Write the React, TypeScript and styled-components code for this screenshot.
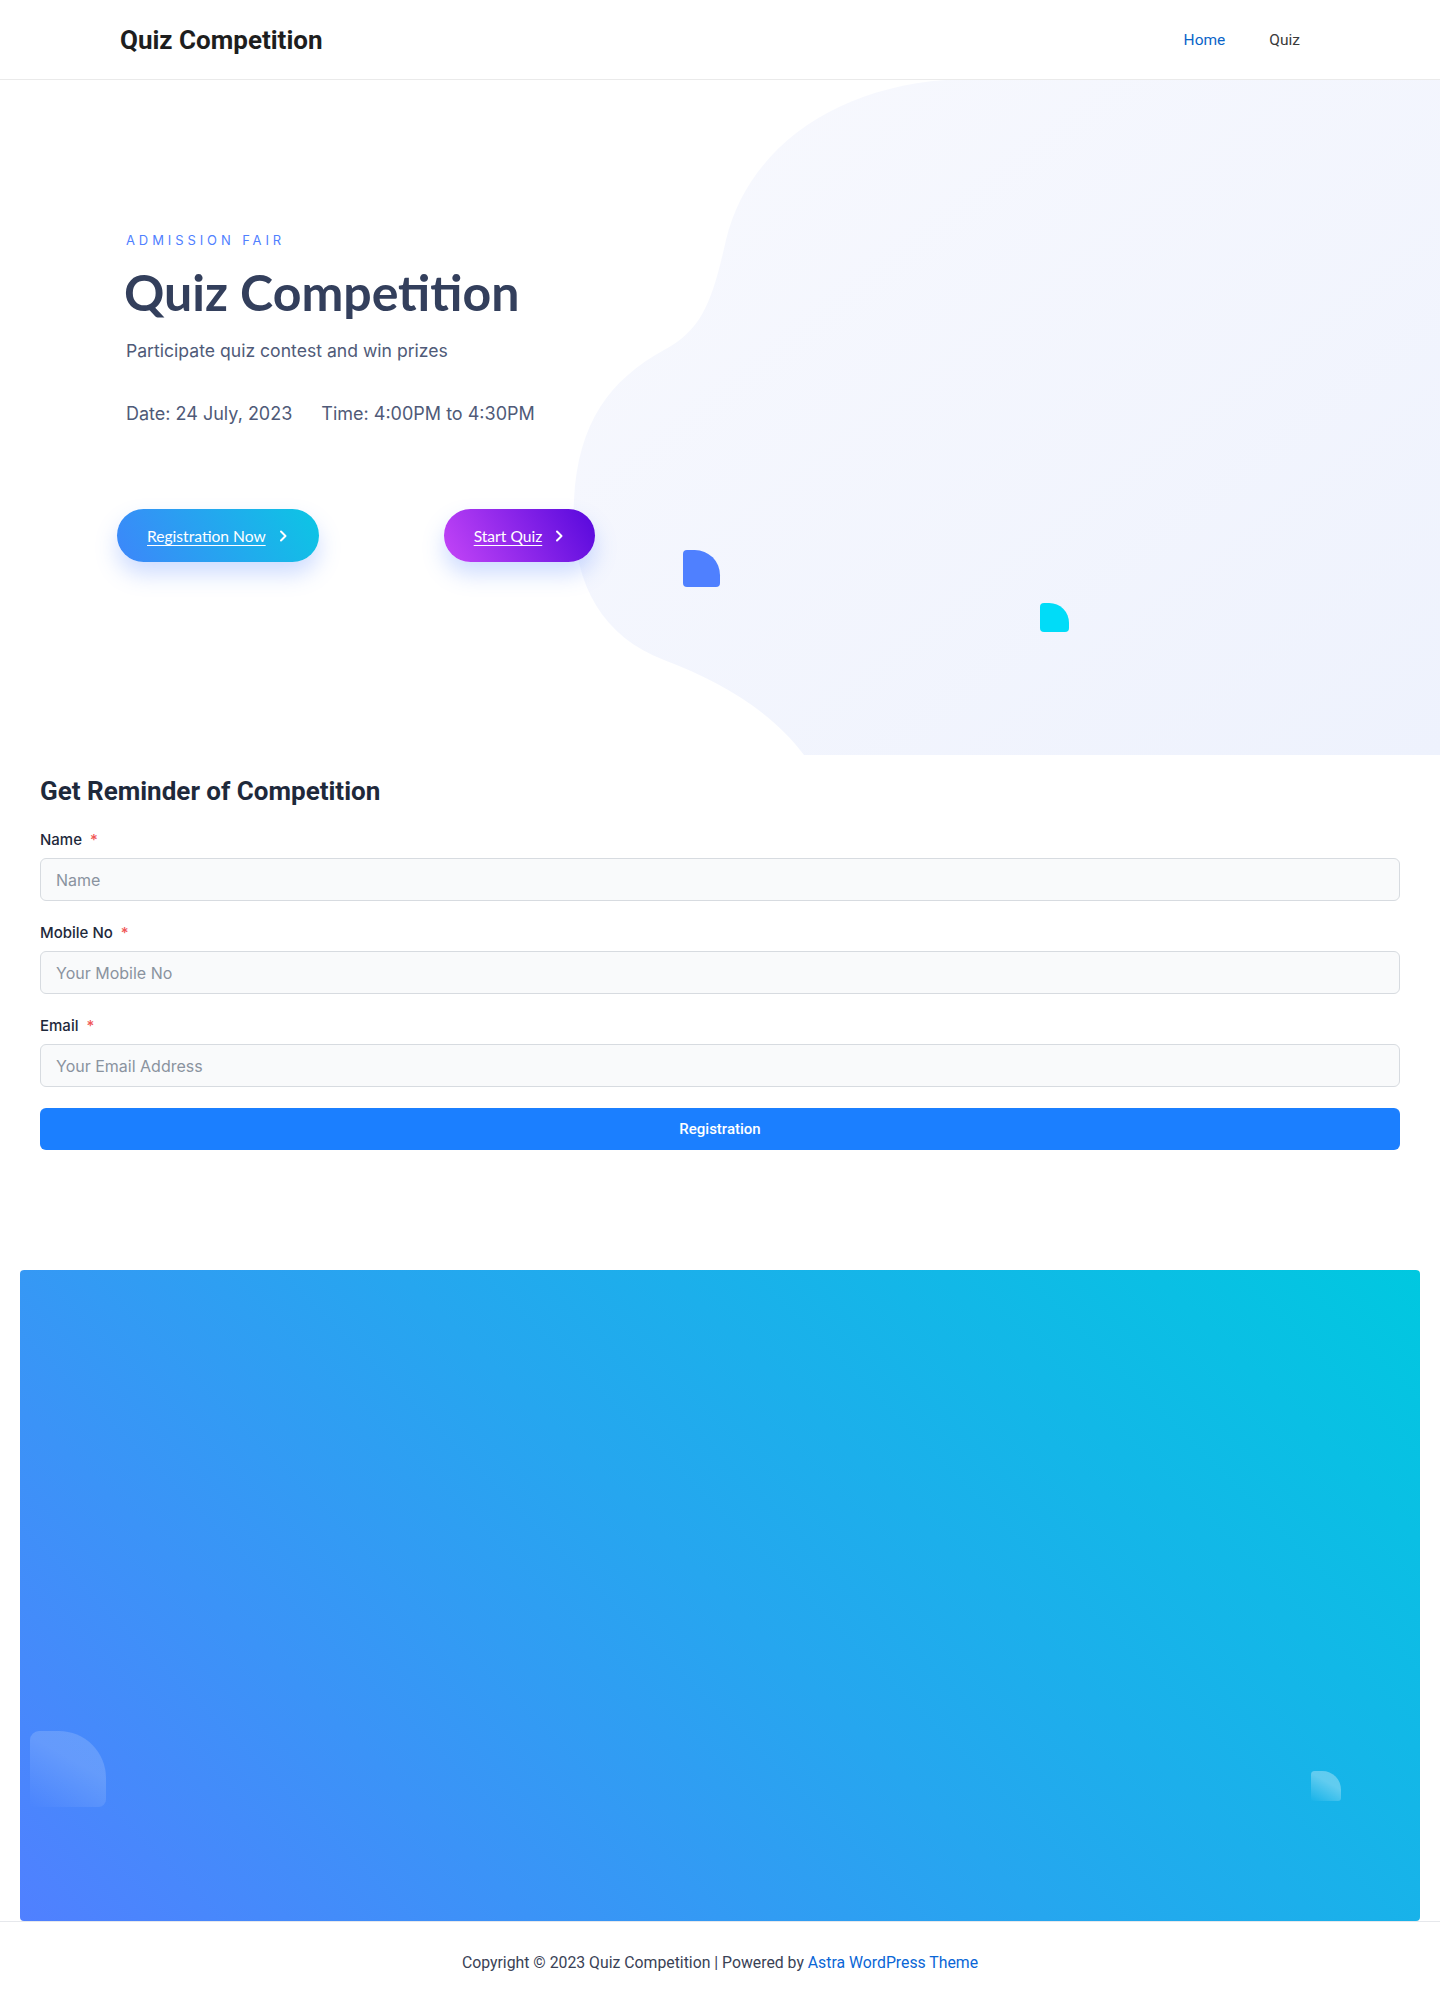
import styled, { createGlobalStyle } from 'styled-components'

const GlobalStyle = createGlobalStyle`
  * { box-sizing: border-box; }
  body {
    margin: 0;
    background: #ffffff;
    font-family: Roboto, "Liberation Sans", sans-serif;
  }
`

const Chevron = () => (
  <svg width="8" height="12" viewBox="0 0 8 12" fill="none">
    <path d="M2 1.5 L6.5 6 L2 10.5" stroke="#ffffff" strokeWidth="2" strokeLinecap="round" strokeLinejoin="round" />
  </svg>
)

const HeroBlob = () => (
  <BlobSvg viewBox="0 0 1440 675" preserveAspectRatio="none">
    <defs>
      <linearGradient id="blobFill" x1="0" y1="0" x2="1" y2="1">
        <stop offset="0%" stopColor="#f8f9fe" />
        <stop offset="100%" stopColor="#eef2fd" />
      </linearGradient>
    </defs>
    <path
      d="M945 0 C835 8 748 68 726 160 C712 222 702 250 664 270 C610 300 578 342 574 420 C570 500 600 556 664 580 C722 602 772 632 804 675 L1440 675 L1440 0 Z"
      fill="url(#blobFill)"
    />
  </BlobSvg>
)

export default function App() {
  return (
    <>
      <GlobalStyle />
      <Header>
        <HeaderInner>
          <Logo>Quiz Competition</Logo>
          <Nav>
            <NavLink $active>Home</NavLink>
            <NavLink>Quiz</NavLink>
          </Nav>
        </HeaderInner>
      </Header>

      <Hero>
        <HeroBlob />
        <Quarter $size={37} $color="#4f80ff" style={{ left: 683, top: 470 }} />
        <Quarter $size={29} $color="#00dcf8" style={{ left: 1040, top: 523 }} />
        <HeroContent>
          <Eyebrow>Admission Fair</Eyebrow>
          <HeroTitle>Quiz Competition</HeroTitle>
          <HeroText>Participate quiz contest and win prizes</HeroText>
          <MetaRow>
            <span>Date: 24 July, 2023</span>
            <span>Time: 4:00PM to 4:30PM</span>
          </MetaRow>
          <ButtonRow>
            <PillButton href="#" $from="#3d86fa" $to="#0cc6e4">
              <span>Registration Now</span>
              <Chevron />
            </PillButton>
            <PillButton href="#" $from="#c445f7" $to="#5608dc">
              <span>Start Quiz</span>
              <Chevron />
            </PillButton>
          </ButtonRow>
        </HeroContent>
      </Hero>

      <FormSection>
        <FormTitle>Get Reminder of Competition</FormTitle>
        <Form onSubmit={(e) => e.preventDefault()}>
          <Field>
            <Label>
              Name <Required>*</Required>
            </Label>
            <Input placeholder="Name" />
          </Field>
          <Field>
            <Label>
              Mobile No <Required>*</Required>
            </Label>
            <Input placeholder="Your Mobile No" />
          </Field>
          <Field>
            <Label>
              Email <Required>*</Required>
            </Label>
            <Input placeholder="Your Email Address" />
          </Field>
          <SubmitButton type="submit">Registration</SubmitButton>
        </Form>
      </FormSection>

      <GradientPanel>
        <PanelShape $size={76} $opacity={0.16} style={{ left: 10, top: 461 }} />
        <PanelShape $size={30} $opacity={0.32} style={{ left: 1291, top: 501 }} />
      </GradientPanel>

      <Footer>
        <span>
          Copyright © 2023 Quiz Competition | Powered by <FooterLink href="#">Astra WordPress Theme</FooterLink>
        </span>
      </Footer>
    </>
  )
}

const Header = styled.header`
  height: 80px;
  border-bottom: 1px solid #eaeaea;
  background: #ffffff;
`

const HeaderInner = styled.div`
  max-width: 1200px;
  height: 100%;
  margin: 0 auto;
  display: flex;
  align-items: center;
  justify-content: space-between;
`

const Logo = styled.div`
  font-family: Roboto, sans-serif;
  font-weight: 700;
  font-size: 26px;
  color: #1e1e1e;
`

const Nav = styled.nav`
  display: flex;
  align-items: center;
`

const NavLink = styled.a<{ $active?: boolean }>`
  padding: 0 20px;
  font-family: Roboto, sans-serif;
  font-size: 15.5px;
  color: ${(p) => (p.$active ? '#0a64c8' : '#3a3a3a')};
  text-decoration: none;
  cursor: pointer;

  &:first-child {
    padding-right: 24px;
  }
`

const Hero = styled.section`
  position: relative;
  height: 675px;
  overflow: hidden;
`

const BlobSvg = styled.svg`
  position: absolute;
  inset: 0;
  width: 100%;
  height: 100%;
  z-index: 0;
`

const Quarter = styled.div<{ $size: number; $color: string }>`
  position: absolute;
  width: ${(p) => p.$size}px;
  height: ${(p) => p.$size}px;
  background: ${(p) => p.$color};
  border-radius: 4px 68% 4px 4px;
  z-index: 1;
`

const HeroContent = styled.div`
  position: relative;
  z-index: 2;
  padding: 152px 0 0 126px;
  font-family: Inter, "Open Sans", sans-serif;
`

const Eyebrow = styled.div`
  font-size: 13px;
  line-height: 16px;
  letter-spacing: 3.9px;
  text-transform: uppercase;
  color: #4f80ff;
  font-weight: 400;
`

const HeroTitle = styled.h1`
  margin: 14px 0 0 -2px;
  font-family: Lato, Inter, sans-serif;
  font-size: 50px;
  line-height: 60px;
  font-weight: 700;
  color: #333f5c;
`

const HeroText = styled.p`
  margin: 17px 0 0;
  font-size: 17.6px;
  line-height: 24px;
  color: #4f5a78;
`

const MetaRow = styled.div`
  margin-top: 38px;
  display: flex;
  gap: 29px;
  font-size: 18px;
  line-height: 26px;
  color: #4f5a78;
`

const ButtonRow = styled.div`
  margin-top: 82px;
  margin-left: -9px;
  display: flex;
  gap: 125px;
  font-family: Lato, Inter, sans-serif;
`

const PillButton = styled.a<{ $from: string; $to: string }>`
  height: 53px;
  display: inline-flex;
  align-items: center;
  gap: 13px;
  padding: 0 32px 0 30px;
  border-radius: 27px;
  background: linear-gradient(60deg, ${(p) => p.$from} 0%, ${(p) => p.$to} 100%);
  box-shadow: 0 12px 22px rgba(79, 128, 255, 0.28);
  color: #ffffff;
  font-size: 15.6px;
  text-decoration: none;

  span {
    text-decoration: underline;
    text-underline-offset: 3px;
  }
`

const FormSection = styled.section`
  padding: 20px 40px 0;
  font-family: Inter, Roboto, sans-serif;
`

const FormTitle = styled.h2`
  margin: 0;
  font-family: Roboto, Inter, sans-serif;
  font-size: 26px;
  line-height: 32px;
  font-weight: 700;
  color: #1e293b;
`

const Form = styled.form`
  margin-top: 23px;
  display: flex;
  flex-direction: column;
`

const Field = styled.div`
  display: flex;
  flex-direction: column;
  gap: 8px;
  margin-bottom: 22px;

  &:last-of-type {
    margin-bottom: 21px;
  }
`

const Label = styled.label`
  font-size: 15px;
  line-height: 20px;
  font-weight: 500;
  color: #1e293b;
`

const Required = styled.span`
  color: #f05656;
  margin-left: 4px;
`

const Input = styled.input`
  height: 43px;
  width: 100%;
  padding: 0 15px;
  border: 1px solid #d7dbe0;
  border-radius: 6px;
  background: #f9fafb;
  font-family: Inter, sans-serif;
  font-size: 16px;
  color: #1e293b;
  outline: none;

  &::placeholder {
    color: #8a939f;
  }
`

const SubmitButton = styled.button`
  height: 42px;
  width: 100%;
  border: none;
  border-radius: 6px;
  background: #1b7fff;
  color: #ffffff;
  font-family: Roboto, sans-serif;
  font-size: 15px;
  font-weight: 500;
  cursor: pointer;
`

const GradientPanel = styled.div`
  position: relative;
  margin: 120px 20px 0;
  height: 651px;
  border-radius: 4px;
  background: linear-gradient(45deg, #5080ff 0%, #26a6ef 50%, #00c8e0 100%);
  overflow: hidden;
`

const PanelShape = styled.div<{ $size: number; $opacity: number }>`
  position: absolute;
  width: ${(p) => p.$size}px;
  height: ${(p) => p.$size}px;
  border-radius: 12% 62% 10% 0;
  background: linear-gradient(
    30deg,
    rgba(255, 255, 255, 0) 0%,
    rgba(255, 255, 255, ${(p) => p.$opacity}) 60%
  );
`

const Footer = styled.footer`
  height: 81px;
  border-top: 1px solid #e6e8ec;
  display: flex;
  align-items: center;
  justify-content: center;
  font-family: Roboto, sans-serif;
  font-size: 15.8px;
  color: #3a4256;
`

const FooterLink = styled.a`
  color: #0a66d6;
  text-decoration: none;
`
